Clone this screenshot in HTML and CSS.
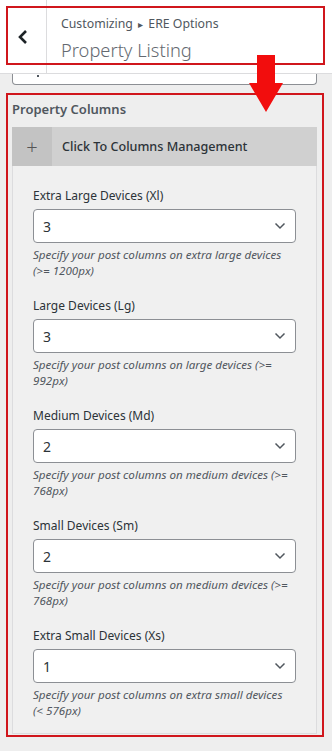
FILE: index.html
```html
<!DOCTYPE html>
<html>
<head>
<meta charset="utf-8">
<link rel="stylesheet" href="styles.css">
</head>
<body>
<div class="page">
  <header class="header">
    <div class="back">
      <svg width="12" height="16" viewBox="0 0 12 16"><path d="M9 2 L3 8 L9 14" fill="none" stroke="#1d2327" stroke-width="2.6"/></svg>
    </div>
    <div class="titles">
      <div class="crumb">Customizing <span class="tri">&#9656;</span> ERE Options</div>
      <div class="title">Property Listing</div>
    </div>
  </header>
  <div class="prev-input"><span class="caret"></span></div>

  <section class="section">
    <h3 class="section-title">Property Columns</h3>
    <div class="band">
      <div class="plus">+</div>
      <div class="band-label">Click To Columns Management</div>
    </div>
    <div class="content">
      <div class="field">
        <label class="label">Extra Large Devices (Xl)</label>
        <div class="select"><span>3</span><svg width="12" height="8" viewBox="0 0 12 8"><path d="M1.5 1.5 L6 6 L10.5 1.5" fill="none" stroke="#50575e" stroke-width="1.5"/></svg></div>
        <p class="desc">Specify your post columns on extra large devices<br>(&gt;= 1200px)</p>
      </div>
      <div class="field">
        <label class="label">Large Devices (Lg)</label>
        <div class="select"><span>3</span><svg width="12" height="8" viewBox="0 0 12 8"><path d="M1.5 1.5 L6 6 L10.5 1.5" fill="none" stroke="#50575e" stroke-width="1.5"/></svg></div>
        <p class="desc">Specify your post columns on large devices (&gt;=<br>992px)</p>
      </div>
      <div class="field">
        <label class="label">Medium Devices (Md)</label>
        <div class="select"><span>2</span><svg width="12" height="8" viewBox="0 0 12 8"><path d="M1.5 1.5 L6 6 L10.5 1.5" fill="none" stroke="#50575e" stroke-width="1.5"/></svg></div>
        <p class="desc">Specify your post columns on medium devices (&gt;=<br>768px)</p>
      </div>
      <div class="field">
        <label class="label">Small Devices (Sm)</label>
        <div class="select"><span>2</span><svg width="12" height="8" viewBox="0 0 12 8"><path d="M1.5 1.5 L6 6 L10.5 1.5" fill="none" stroke="#50575e" stroke-width="1.5"/></svg></div>
        <p class="desc">Specify your post columns on medium devices (&gt;=<br>768px)</p>
      </div>
      <div class="field">
        <label class="label">Extra Small Devices (Xs)</label>
        <div class="select"><span>1</span><svg width="12" height="8" viewBox="0 0 12 8"><path d="M1.5 1.5 L6 6 L10.5 1.5" fill="none" stroke="#50575e" stroke-width="1.5"/></svg></div>
        <p class="desc">Specify your post columns on extra small devices<br>(&lt; 576px)</p>
      </div>
    </div>
  </section>

  <div class="mark mark-header"></div>
  <div class="mark mark-section"></div>
  <svg class="arrow" width="36" height="58" viewBox="0 0 36 58"><path d="M9 0 H27 V28 H35 L18 57 L1 28 H9 Z" fill="#f20d0d"/></svg>
</div>
</body>
</html>
```

FILE: styles.css
```css
* { box-sizing: border-box; }
html, body { margin: 0; padding: 0; }
body {
  background: #eeeeee;
  font-family: "Noto Sans", "Open Sans", sans-serif;
  color: #3c434a;
  width: 332px;
  height: 751px;
  overflow: hidden;
}
.page { position: relative; height: 751px; }

.header {
  display: flex;
  height: 74px;
  background: #ffffff;
  border-bottom: 1px solid #dcdcde;
}
.back {
  width: 47px;
  border-right: 1px solid #dcdcde;
  display: flex;
  align-items: center;
  justify-content: center;
}
.titles {
  padding: 14px 0 0 14px;
}
.crumb {
  font-size: 12.3px;
  line-height: 20px;
  color: #50575e;
}
.tri { font-size: 10px; padding: 0 2px; }
.title {
  font-size: 18.3px;
  line-height: 28px;
  margin-top: 2px;
  color: #646970;
  font-weight: 300;
}

.prev-input {
  margin: 0 15px 0 12px;
  height: 11px;
  border: 1px solid #8c8f94;
  border-top: none;
  border-radius: 0 0 4px 4px;
  background: #fff;
  position: relative;
}
.caret {
  position: absolute;
  left: 24px;
  top: 1px;
  width: 2px;
  height: 2px;
  background: #50575e;
}

.section {
  padding: 0 15px 0 12px;
}
.section-title {
  margin: 0;
  padding: 14px 0 0 0;
  font-size: 13px;
  line-height: 20px;
  font-weight: 600;
  color: #50575e;
  height: 42px;
}
.band {
  display: flex;
  height: 39px;
  background: #d0d0d0;
}
.plus {
  width: 40px;
  background: #c3c3c3;
  display: flex;
  align-items: center;
  justify-content: center;
  font-size: 20px;
  font-weight: 300;
  color: #555;
}
.band-label {
  display: flex;
  align-items: center;
  padding-left: 10px;
  font-size: 12.6px;
  font-weight: 500;
  color: #2c3338;
}
.content {
  background: #f0f0f0;
  border: 1px solid #dcdcde;
  border-top: none;
  padding: 21px 20px 14px 20px;
}
.field + .field { margin-top: 18px; }
.label {
  display: block;
  font-size: 12px;
  line-height: 18px;
  font-weight: 400;
  color: #2c3338;
  margin-bottom: 4px;
}
.select {
  height: 34px;
  background: #fff;
  border: 1px solid #8c8f94;
  border-radius: 4px;
  display: flex;
  align-items: center;
  justify-content: space-between;
  padding: 0 9px 0 9px;
  font-size: 14px;
  color: #2c3338;
}
.desc {
  margin: 4px 0 0 0;
  font-size: 11.6px;
  line-height: 16px;
  font-style: italic;
  color: #50575e;
  white-space: nowrap;
}

.mark {
  position: absolute;
  border: 2px solid #d0161c;
  pointer-events: none;
}
.mark-header { left: 6px; top: 6px; width: 319px; height: 59px; }
.mark-section { left: 6px; top: 93px; width: 318px; height: 644px; }
.arrow {
  position: absolute;
  left: 248px;
  top: 55px;
}
```
